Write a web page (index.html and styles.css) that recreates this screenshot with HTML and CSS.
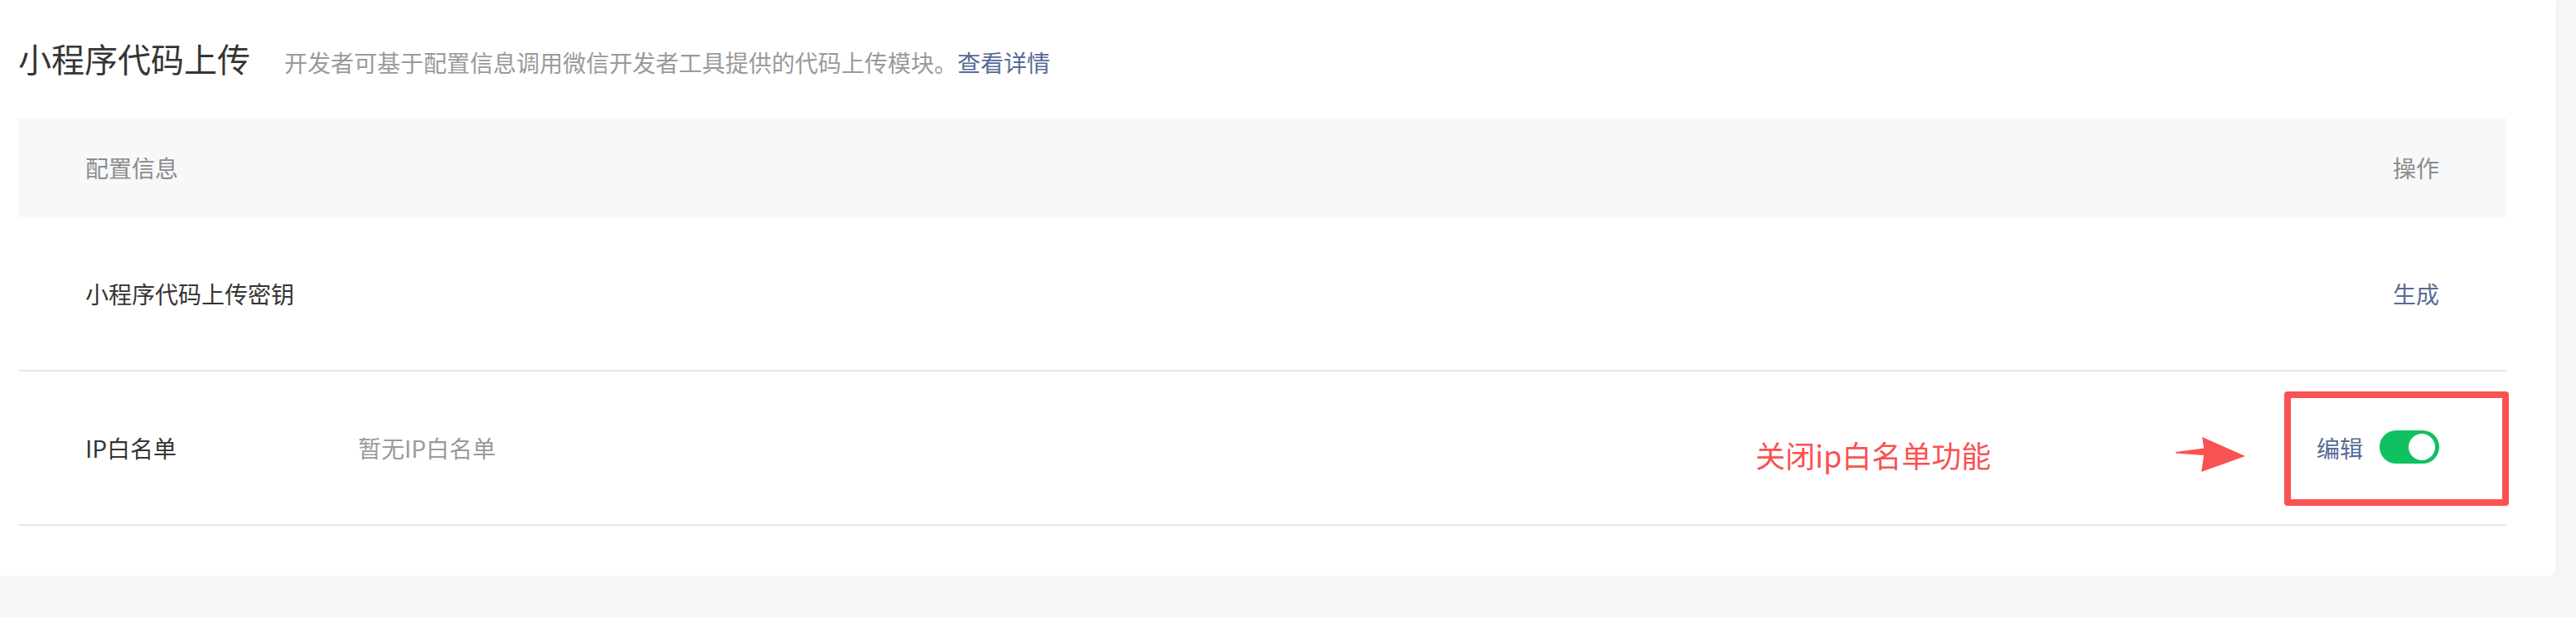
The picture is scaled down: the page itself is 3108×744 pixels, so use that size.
FILE: index.html
```html
<!DOCTYPE html>
<html lang="zh-CN">
<head>
<meta charset="utf-8">
<title>小程序代码上传</title>
<link rel="stylesheet" href="styles.css">
</head>
<body>
<div class="card">
  <div class="head">
    <h2 class="title">小程序代码上传</h2>
    <p class="desc">开发者可基于配置信息调用微信开发者工具提供的代码上传模块。<a class="link" href="#">查看详情</a></p>
  </div>
  <div class="table">
    <div class="thead">
      <span>配置信息</span>
      <span>操作</span>
    </div>
    <div class="row">
      <span class="label">小程序代码上传密钥</span>
      <span class="value"></span>
      <span class="ops"><a class="link" href="#">生成</a></span>
    </div>
    <div class="row">
      <span class="label">IP白名单</span>
      <span class="value muted">暂无IP白名单</span>
      <span class="ops"><a class="link" href="#">编辑</a><span class="switch"></span></span>
      <span class="note">关闭ip白名单功能</span>
      <svg class="arrow" width="84" height="42" viewBox="0 0 84 42"><polygon points="0,18 34,13.5 32,0 84,23 31,42 34,22 0,19.5" fill="#fa5252"/></svg>
      <span class="mark"></span>
    </div>
  </div>
</div>
</body>
</html>
```

FILE: styles.css
```css
html, body {
  margin: 0;
  padding: 0;
}
body {
  background: #f6f7f9;
  font-family: "Noto Sans CJK SC", "Noto Sans", sans-serif;
  color: #353535;
}
.card {
  width: 3084px;
  box-sizing: border-box;
  background: #fff;
  border-bottom-right-radius: 8px;
  box-shadow: 0 2px 5px rgba(0, 0, 0, 0.05);
  padding: 0 60px 60px 22px;
}
.head {
  height: 142px;
  box-sizing: border-box;
  padding-top: 42px;
  display: flex;
  align-items: baseline;
}
.title {
  margin: 0;
  font-size: 40px;
  line-height: 56px;
  font-weight: 400;
  color: #353535;
}
.desc {
  margin: 0 0 0 41px;
  font-size: 28px;
  line-height: 40px;
  color: #9a9a9a;
}
.link {
  color: #576b95;
  text-decoration: none;
}
.table {
  font-size: 28px;
  line-height: 40px;
}
.thead {
  height: 120px;
  background: #f7f8fa;
  display: flex;
  align-items: center;
  justify-content: space-between;
  padding: 0 81px;
  color: #8c8c8c;
}
.row {
  position: relative;
  height: 186px;
  box-sizing: border-box;
  border-bottom: 2px solid #e7e7eb;
  display: flex;
  align-items: center;
  padding: 0 81px;
}
.label {
  width: 329px;
  flex: none;
}
.value {
  flex: 1;
}
.muted {
  color: #9a9a9a;
}
.ops {
  display: flex;
  align-items: center;
  gap: 20px;
}
.switch {
  position: relative;
  width: 72px;
  height: 40px;
  border-radius: 20px;
  background: #0fc160;
  margin-top: -3px;
}
.switch::after {
  content: "";
  position: absolute;
  top: 4px;
  right: 5px;
  width: 32px;
  height: 32px;
  border-radius: 50%;
  background: #fff;
}
.note {
  position: absolute;
  left: 2096px;
  top: 76px;
  font-size: 36px;
  line-height: 48px;
  color: #fa5252;
  white-space: nowrap;
}
.arrow {
  position: absolute;
  left: 2603px;
  top: 79px;
}
.mark {
  position: absolute;
  left: 2734px;
  top: 24px;
  width: 271px;
  height: 138px;
  box-sizing: border-box;
  border: 8px solid #fa5252;
  border-radius: 4px;
}
```
